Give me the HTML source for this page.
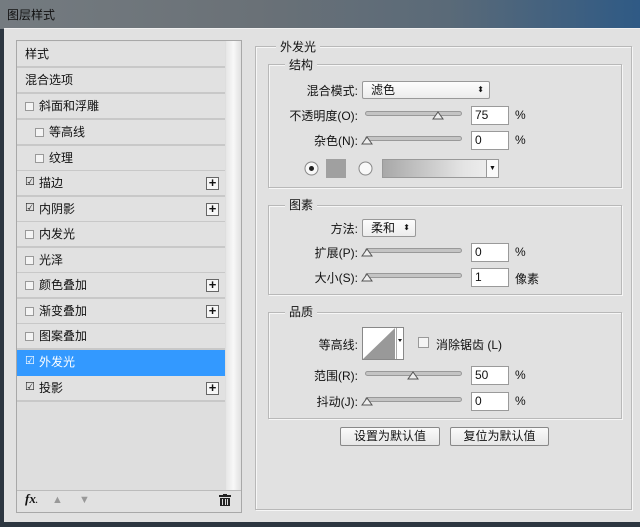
<!DOCTYPE html>
<html><head><meta charset="utf-8"><style>
*{margin:0;padding:0;box-sizing:border-box}
body{width:640px;height:527px;overflow:hidden;background:#2c3640;font-family:"Liberation Sans","Noto Sans CJK SC",sans-serif;font-size:12px;color:#111;position:relative}
.a{position:absolute}
#title{left:0;top:0;width:640px;height:29px;background:linear-gradient(90deg,#747b80 0%,#6a7177 40%,#5a6a78 70%,#2f5a85 100%)}
#body{left:4px;top:28px;width:640px;height:494px;background:#e1e1e1;border-top:1px solid #f0f0f0}
.row{position:absolute;left:17px;width:208px;height:26px;border-bottom:2px solid #c8c8c8;background:#e1e1e1;line-height:24px;font-size:12px}
.cb{position:absolute;width:9px;height:9px;border:1px solid #999;background:#f4f4f4;top:8px}
.ck{position:absolute;width:9px;height:9px;top:7px;font-size:11px;line-height:9px;color:#222}
.plus{position:absolute;left:189px;top:6px;width:13px;height:13px;border:1px solid #666;background:#f6f6f6;font-weight:bold;font-size:13px;line-height:10px;text-align:center}
.box{position:absolute;border:1px solid #b8b8b8;box-shadow:1px 1px 0 #f6f6f6 inset,1px 1px 0 #f6f6f6}
.lg{position:absolute;background:#e1e1e1;padding:0 4px;font-size:12px}
.lbl{position:absolute;text-align:right;font-size:12px}
.sl{position:absolute;height:5px;border:1px solid #999;border-radius:3px;background:#c4c4c4}
.inp{position:absolute;width:38px;height:19px;background:#fff;border:1px solid #9a9a9a;padding-left:3px;line-height:17px;font-size:12px}
.sel{position:absolute;height:18px;background:linear-gradient(#fdfdfd,#ececec);border:1px solid #999;border-radius:2px;line-height:16px;padding-left:8px}
.btn{position:absolute;height:19px;background:linear-gradient(#fafafa,#e6e6e6);border:1px solid #888;border-radius:2px;text-align:center;line-height:17px;font-size:12px}
</style></head><body>
<div id="title" class="a"><div class="a" style="left:7px;top:6px;font-size:12px;color:#111">图层样式</div></div>
<div id="body" class="a"></div>
<div class="a" style="left:16px;top:40px;width:226px;height:473px;border:1px solid #a8a8a8;background:#dedede"></div>
<div class="a" style="left:226px;top:41px;width:15px;height:449px;background:linear-gradient(90deg,#e6e6e6,#f8f8f8,#e0e0e0)"></div>
<div class="row" style="top:42px"><span style="margin-left:8px">样式</span></div>
<div class="row" style="top:68px"><span style="margin-left:8px">混合选项</span></div>
<div class="row" style="top:94px"><div class="cb" style="left:8px"></div><span style="margin-left:22px">斜面和浮雕</span></div>
<div class="row" style="top:120px"><div class="cb" style="left:18px"></div><span style="margin-left:32px">等高线</span></div>
<div class="row" style="top:146px"><div class="cb" style="left:18px"></div><span style="margin-left:32px">纹理</span></div>
<div class="row" style="top:171px"><div class="ck" style="left:8px">☑</div><span style="margin-left:22px">描边</span><div class="plus">+</div></div>
<div class="row" style="top:197px"><div class="ck" style="left:8px">☑</div><span style="margin-left:22px">内阴影</span><div class="plus">+</div></div>
<div class="row" style="top:222px"><div class="cb" style="left:8px"></div><span style="margin-left:22px">内发光</span></div>
<div class="row" style="top:248px"><div class="cb" style="left:8px"></div><span style="margin-left:22px">光泽</span></div>
<div class="row" style="top:273px"><div class="cb" style="left:8px"></div><span style="margin-left:22px">颜色叠加</span><div class="plus">+</div></div>
<div class="row" style="top:299px"><div class="cb" style="left:8px"></div><span style="margin-left:22px">渐变叠加</span><div class="plus">+</div></div>
<div class="row" style="top:324px"><div class="cb" style="left:8px"></div><span style="margin-left:22px">图案叠加</span></div>
<div class="row" style="top:350px;background:#3399ff;color:#fff;border-bottom-color:#3399ff"><div class="ck" style="left:8px;color:#fff">☑</div><span style="margin-left:22px">外发光</span></div>
<div class="row" style="top:376px"><div class="ck" style="left:8px">☑</div><span style="margin-left:22px">投影</span><div class="plus">+</div></div>
<div class="a" style="left:17px;top:490px;width:224px;height:22px;border-top:1px solid #bbb;background:#e1e1e1"></div>
<div class="a" style="left:25px;top:491px;font-family:'Liberation Serif',serif;font-style:italic;font-weight:bold;font-size:13px">fx<span style="font-size:8px">.</span></div>
<div class="a" style="left:52px;top:494px;color:#999;font-size:11px">▲</div>
<div class="a" style="left:79px;top:494px;color:#999;font-size:11px">▼</div>
<svg class="a" style="left:219px;top:494px" width="12" height="12"><rect x="0" y="1" width="12" height="2" fill="#222"/><rect x="4" y="0" width="4" height="2" fill="#222"/><rect x="1" y="4" width="10" height="8" fill="#222"/><rect x="3" y="5" width="1" height="6" fill="#ddd"/><rect x="6" y="5" width="1" height="6" fill="#ddd"/><rect x="8" y="5" width="1" height="6" fill="#ddd"/></svg>
<div class="box" style="left:255px;top:46px;width:377px;height:464px"></div>
<div class="lg" style="left:276px;top:38px">外发光</div>
<div class="box" style="left:268px;top:64px;width:354px;height:124px"></div>
<div class="lg" style="left:285px;top:56px">结构</div>
<div class="lbl" style="left:280px;top:82px;width:78px">混合模式:</div>
<div class="sel" style="left:362px;top:81px;width:128px">滤色<span style="position:absolute;right:5px;font-size:8px;top:0">⬍</span></div>
<div class="lbl" style="left:270px;top:107px;width:88px">不透明度(O):</div>
<div class="sl" style="left:365px;top:111px;width:97px"></div>
<svg class="a" style="left:432px;top:111px" width="12" height="9"><path d="M1 8 L6 1 L11 8 Z" fill="#eee" stroke="#555"/></svg>
<div class="inp" style="left:471px;top:106px">75</div><div class="a" style="left:515px;top:108px">%</div>
<div class="lbl" style="left:270px;top:132px;width:88px">杂色(N):</div>
<div class="sl" style="left:365px;top:136px;width:97px"></div>
<svg class="a" style="left:361px;top:136px" width="12" height="9"><path d="M1 8 L6 1 L11 8 Z" fill="#eee" stroke="#555"/></svg>
<div class="inp" style="left:471px;top:131px">0</div><div class="a" style="left:515px;top:133px">%</div>
<svg class="a" style="left:304px;top:161px" width="15" height="15"><circle cx="7.5" cy="7.5" r="6.5" fill="#f8f8f8" stroke="#888"/><circle cx="7.5" cy="7.5" r="2.5" fill="#222"/></svg>
<div class="a" style="left:326px;top:159px;width:20px;height:19px;background:#a0a0a0"></div>
<svg class="a" style="left:358px;top:161px" width="15" height="15"><circle cx="7.5" cy="7.5" r="6.5" fill="#f8f8f8" stroke="#888"/></svg>
<div class="a" style="left:382px;top:159px;width:117px;height:19px;border:1px solid #999;background:linear-gradient(90deg,#a8a8a8,#e4e4e4 70%,#f0f0f0)"></div>
<div class="a" style="left:486px;top:160px;width:12px;height:17px;background:#fafafa;border-left:1px solid #999;font-size:7px;text-align:center;line-height:17px">▼</div>
<div class="box" style="left:268px;top:205px;width:354px;height:90px"></div>
<div class="lg" style="left:285px;top:196px">图素</div>
<div class="lbl" style="left:280px;top:220px;width:78px">方法:</div>
<div class="sel" style="left:362px;top:219px;width:54px">柔和<span style="position:absolute;right:5px;font-size:8px;top:0">⬍</span></div>
<div class="lbl" style="left:270px;top:244px;width:88px">扩展(P):</div>
<div class="sl" style="left:365px;top:248px;width:97px"></div>
<svg class="a" style="left:361px;top:248px" width="12" height="9"><path d="M1 8 L6 1 L11 8 Z" fill="#eee" stroke="#555"/></svg>
<div class="inp" style="left:471px;top:243px">0</div><div class="a" style="left:515px;top:245px">%</div>
<div class="lbl" style="left:270px;top:269px;width:88px">大小(S):</div>
<div class="sl" style="left:365px;top:273px;width:97px"></div>
<svg class="a" style="left:361px;top:273px" width="12" height="9"><path d="M1 8 L6 1 L11 8 Z" fill="#eee" stroke="#555"/></svg>
<div class="inp" style="left:471px;top:268px">1</div><div class="a" style="left:515px;top:270px">像素</div>
<div class="box" style="left:268px;top:312px;width:354px;height:107px"></div>
<div class="lg" style="left:285px;top:303px">品质</div>
<div class="lbl" style="left:280px;top:336px;width:78px">等高线:</div>
<svg class="a" style="left:362px;top:327px" width="42" height="33"><rect x="0.5" y="0.5" width="41" height="32" fill="#fff" stroke="#888"/><path d="M1 32 L33 1 L33 32 Z" fill="#999"/><line x1="34.5" y1="1" x2="34.5" y2="32" stroke="#aaa"/><path d="M36 12 L40 12 L38 15Z" fill="#222"/></svg>
<div class="a" style="left:418px;top:337px;width:11px;height:11px;border:1px solid #999;background:#f4f4f4"></div>
<div class="a" style="left:436px;top:336px">消除锯齿 (L)</div>
<div class="lbl" style="left:270px;top:367px;width:88px">范围(R):</div>
<div class="sl" style="left:365px;top:371px;width:97px"></div>
<svg class="a" style="left:407px;top:371px" width="12" height="9"><path d="M1 8 L6 1 L11 8 Z" fill="#eee" stroke="#555"/></svg>
<div class="inp" style="left:471px;top:366px">50</div><div class="a" style="left:515px;top:368px">%</div>
<div class="lbl" style="left:270px;top:393px;width:88px">抖动(J):</div>
<div class="sl" style="left:365px;top:397px;width:97px"></div>
<svg class="a" style="left:361px;top:397px" width="12" height="9"><path d="M1 8 L6 1 L11 8 Z" fill="#eee" stroke="#555"/></svg>
<div class="inp" style="left:471px;top:392px">0</div><div class="a" style="left:515px;top:394px">%</div>
<div class="btn" style="left:340px;top:427px;width:100px">设置为默认值</div>
<div class="btn" style="left:450px;top:427px;width:99px">复位为默认值</div>
</body></html>
